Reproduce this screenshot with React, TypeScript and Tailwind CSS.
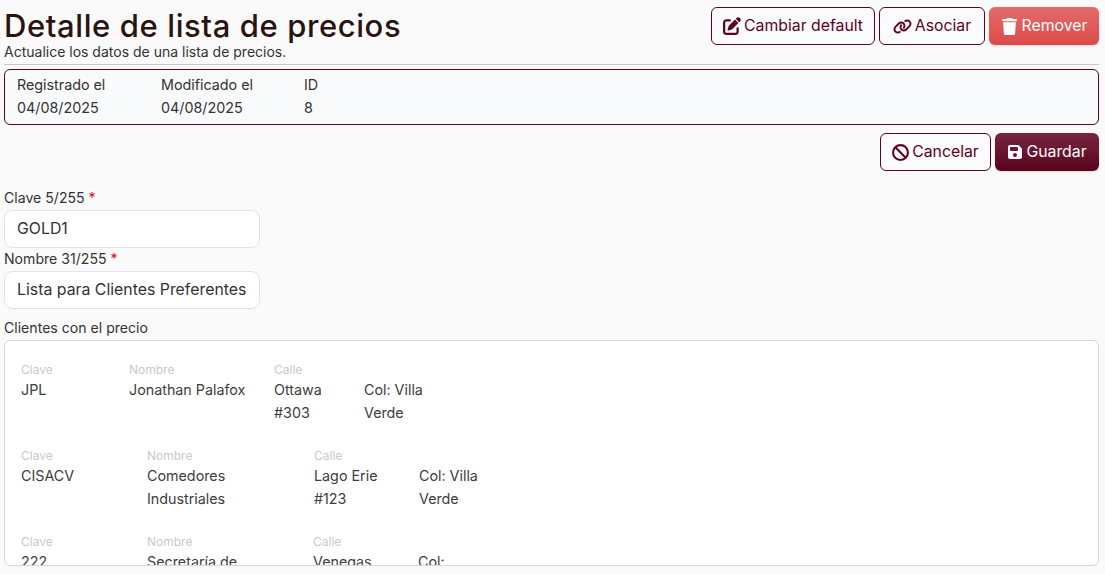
import { FaPenToSquare, FaLink, FaTrash, FaBan, FaFloppyDisk } from "react-icons/fa6";

const font = "font-['Inter','Roboto',sans-serif]";

function OutlineBtn({ icon, label, w }: { icon: React.ReactNode; label: string; w: string }) {
  return (
    <button className={`${w} h-[38px] flex items-center justify-center gap-[3px] rounded-md border border-[#5f0220] bg-[#fbfbfd] text-[#5f0220] text-[15.8px]`}>
      {icon}
      <span>{label}</span>
    </button>
  );
}

function Cell({ label, lines, w }: { label: string; lines: string[]; w: string }) {
  return (
    <div className={`${w} shrink-0`}>
      <div className="text-[12px] leading-[16px] text-[#c9c9c9]">{label || "\u00a0"}</div>
      {lines.map((l) => (
        <div key={l} className="text-[14.3px] leading-[23px] text-[#3d3d3d]">{l}</div>
      ))}
    </div>
  );
}

const rows = [
  { h: "h-[86px]", cells: [
    { label: "Clave", lines: ["JPL"], w: "w-[108px]" },
    { label: "Nombre", lines: ["Jonathan Palafox"], w: "w-[145px]" },
    { label: "Calle", lines: ["Ottawa", "#303"], w: "w-[90px]" },
    { label: "", lines: ["Col: Villa", "Verde"], w: "w-[90px]" },
  ]},
  { h: "h-[86px]", cells: [
    { label: "Clave", lines: ["CISACV"], w: "w-[126px]" },
    { label: "Nombre", lines: ["Comedores", "Industriales"], w: "w-[167px]" },
    { label: "Calle", lines: ["Lago Erie", "#123"], w: "w-[105px]" },
    { label: "", lines: ["Col: Villa", "Verde"], w: "w-[90px]" },
  ]},
  { h: "h-[86px]", cells: [
    { label: "Clave", lines: ["222"], w: "w-[126px]" },
    { label: "Nombre", lines: ["Secretaría de"], w: "w-[166px]" },
    { label: "Calle", lines: ["Venegas"], w: "w-[105px]" },
    { label: "", lines: ["Col:"], w: "w-[90px]" },
  ]},
];

export default function App() {
  return (
    <div className={`${font} w-[1105px] h-[574px] overflow-hidden bg-[#fafafa] px-[4px] pr-[6px] text-[#333]`}>
      <div className="flex justify-between items-start h-[65px] border-b border-[#c8c8c8]">
        <div className="pt-[7px]">
          <h1 className="text-[31px] leading-[37px] font-medium text-[#2a1410] tracking-[0.6px]">Detalle de lista de precios</h1>
          <p className="text-[14px] leading-[16px] text-[#333]">Actualice los datos de una lista de precios.</p>
        </div>
        <div className="flex gap-[4px] pt-[7px]">
          <OutlineBtn w="w-[164px]" label="Cambiar default" icon={<FaPenToSquare className="text-[18px]" />} />
          <OutlineBtn w="w-[106px]" label="Asociar" icon={<FaLink className="text-[19px]" />} />
          <button className="w-[110px] h-[38px] flex items-center justify-center gap-[4px] rounded-md text-white text-[15.8px] bg-gradient-to-b from-[#e36a6a] to-[#dc4a4a] shadow-sm">
            <FaTrash className="text-[17px]" />
            <span>Remover</span>
          </button>
        </div>
      </div>

      <div className="mt-[4px] h-[56px] rounded-md border border-[#5f0220] bg-[#f9fafc] px-[12px] pt-[3px] flex text-[14.3px] leading-[23px]">
        <div className="w-[144px]"><div>Registrado el</div><div>04/08/2025</div></div>
        <div className="w-[143px]"><div>Modificado el</div><div>04/08/2025</div></div>
        <div><div>ID</div><div>8</div></div>
      </div>

      <div className="flex justify-end gap-[4px] mt-[8px]">
        <OutlineBtn w="w-[111px]" label="Cancelar" icon={<FaBan className="text-[17px]" />} />
        <button className="w-[104px] h-[38px] flex items-center justify-center gap-[3px] rounded-md text-white text-[15.8px] bg-gradient-to-b from-[#772540] to-[#5a011c] shadow-sm">
          <FaFloppyDisk className="text-[16px]" />
          <span>Guardar</span>
        </button>
      </div>

      <div className="mt-[17px] text-[14.1px] leading-[20px]">Clave 5/255 <span className="text-red-600">*</span></div>
      <div className="mt-[2px] w-[256px] h-[38px] rounded-lg border border-[#e2e3ea] bg-white px-[12px] flex items-center text-[15.85px] text-[#333]">GOLD1</div>
      <div className="mt-[1px] text-[14.1px] leading-[20px]">Nombre 31/255 <span className="text-red-600">*</span></div>
      <div className="mt-[2px] w-[256px] h-[38px] rounded-lg border border-[#e2e3ea] bg-white px-[12px] flex items-center text-[15.85px] text-[#333] whitespace-nowrap">Lista para Clientes Preferentes</div>
      <div className="mt-[9px] text-[14.1px] leading-[20px]">Clientes con el precio</div>
      <div className="mt-[2px] h-[226px] overflow-hidden rounded-md border border-[#d8d8d8] bg-white pl-[16px] pt-[21px]">
        {rows.map((r, i) => (
          <div key={i} className={`${r.h} flex`}>
            {r.cells.map((c, j) => <Cell key={j} {...c} />)}
          </div>
        ))}
      </div>
    </div>
  );
}
